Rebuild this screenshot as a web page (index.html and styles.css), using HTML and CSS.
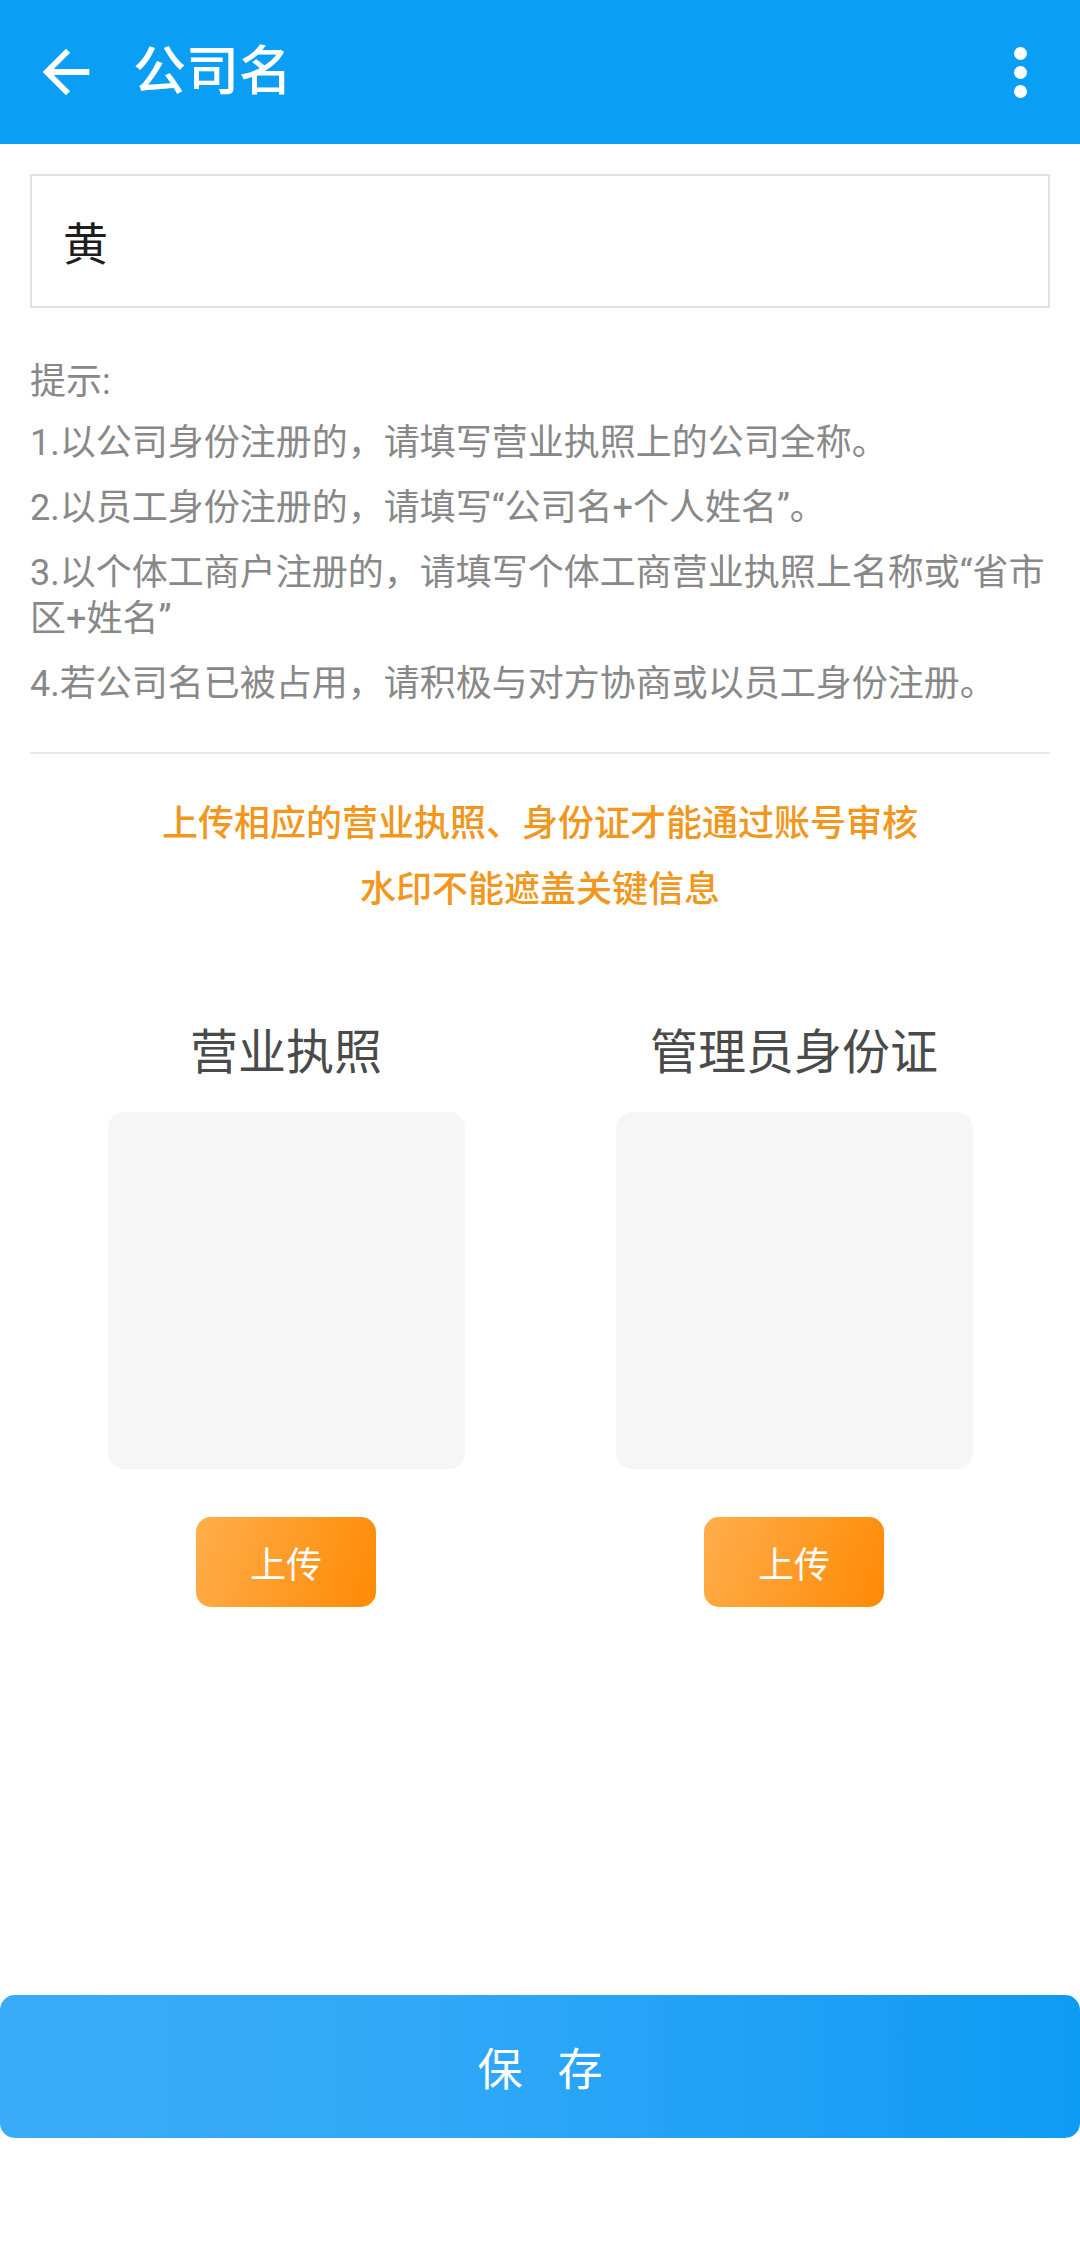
FILE: index.html
```html
<!DOCTYPE html>
<html>
  <head>
    <meta charset="utf-8" />
    <title>公司名</title>
    <link rel="stylesheet" href="styles.css">
  </head>
  <body>
    <!-- 顶部栏 -->
    <div class="header">
      <svg class="back" viewBox="0 0 24 24" width="70" height="70">
        <path fill="#fff" d="M20 11H7.83l5.59-5.59L12 4l-8 8 8 8 1.41-1.41L7.83 13H20v-2z"/>
      </svg>
      <span class="title">公司名</span>
      <svg class="more" viewBox="0 0 13 51" width="13" height="51">
        <circle cx="6.5" cy="6.5" r="6.5" fill="#fff"/>
        <circle cx="6.5" cy="25.5" r="6.5" fill="#fff"/>
        <circle cx="6.5" cy="44.5" r="6.5" fill="#fff"/>
      </svg>
    </div>

    <!-- 输入框 -->
    <div class="name-box">黄</div>

    <!-- 提示 -->
    <div class="tips">
      <p class="tips-title">提示:</p>
      <p>1.以公司身份注册的，请填写营业执照上的公司全称。</p>
      <p>2.以员工身份注册的，请填写“公司名+个人姓名”。</p>
      <p>3.以个体工商户注册的，请填写个体工商营业执照上名称或“省市区+姓名”</p>
      <p>4.若公司名已被占用，请积极与对方协商或以员工身份注册。</p>
    </div>
    <div class="line"></div>

    <div class="notice">
      <p>上传相应的营业执照、身份证才能通过账号审核</p>
      <p>水印不能遮盖关键信息</p>
    </div>

    <!-- 上传 -->
    <div class="uploads">
      <div class="upload-item">
        <div class="upload-label">营业执照</div>
        <div class="upload-pic"></div>
        <div class="upload-btn">上传</div>
      </div>
      <div class="upload-item">
        <div class="upload-label">管理员身份证</div>
        <div class="upload-pic"></div>
        <div class="upload-btn">上传</div>
      </div>
    </div>

    <div class="footer">
      <div class="save-btn">保 存</div>
    </div>
  </body>
</html>
```

FILE: styles.css
```css
html, body {
  height: 100%;
}
body {
  margin: 0;
  padding: 0;
  background-color: #fff;
  font-family: Roboto, "Noto Sans CJK SC", sans-serif;
  display: flex;
  flex-direction: column;
}
.header {
  height: 144px;
  flex-shrink: 0;
  display: flex;
  align-items: center;
  padding: 0 53px 0 31px;
  background-color: #0b9ef5;
  color: #fff;
}
.header .back {
  display: block;
}
.header .title {
  margin-left: 32px;
  font-size: 53px;
  font-weight: 500;
  line-height: 1;
}
.header .more {
  display: block;
  margin-left: auto;
}
.name-box {
  margin: 30px 30px 0;
  height: 134px;
  box-sizing: border-box;
  border: 2px solid #e2e2e2;
  padding: 0 31px;
  display: flex;
  align-items: center;
  font-size: 45px;
  color: #1e1e1e;
}
.tips {
  margin-top: 51px;
  padding: 0 30px;
  color: #888;
  font-size: 36px;
  line-height: 46px;
}
.tips p {
  margin: 0 0 19px;
}
.tips .tips-title {
  margin-bottom: 15px;
}
.tips p:last-child {
  margin-bottom: 0;
}
.line {
  margin: 45px 30px 0;
  height: 2px;
  background-color: #e8e8e8;
}
.notice {
  margin-top: 37px;
  text-align: center;
  color: #f2961c;
  font-size: 36px;
  font-weight: 500;
  line-height: 66px;
}
.notice p {
  margin: 0;
}
.uploads {
  margin-top: 100px;
  padding: 0 32px;
  display: grid;
  grid-template-columns: 1fr 1fr;
}
.upload-item {
  display: flex;
  flex-direction: column;
  align-items: center;
}
.upload-label {
  font-size: 48px;
  line-height: 60px;
  color: #4a4a4a;
}
.upload-pic {
  margin-top: 29px;
  width: 357px;
  height: 357px;
  border-radius: 16px;
  background-color: #f6f6f6;
}
.upload-btn {
  margin-top: 48px;
  width: 180px;
  height: 90px;
  border-radius: 15px;
  background: linear-gradient(110deg, #ffae4c, #ff8a04);
  color: #fff;
  font-size: 36px;
  display: flex;
  align-items: center;
  justify-content: center;
}
.footer {
  margin-top: auto;
  margin-bottom: 121px;
}
.save-btn {
  height: 143px;
  border-radius: 15px;
  background: linear-gradient(90deg, #3aabf8, #31a8f8 40%, #0e9bf3);
  color: #fff;
  font-size: 45px;
  letter-spacing: 12px;
  text-indent: 12px;
  display: flex;
  align-items: center;
  justify-content: center;
}
```
